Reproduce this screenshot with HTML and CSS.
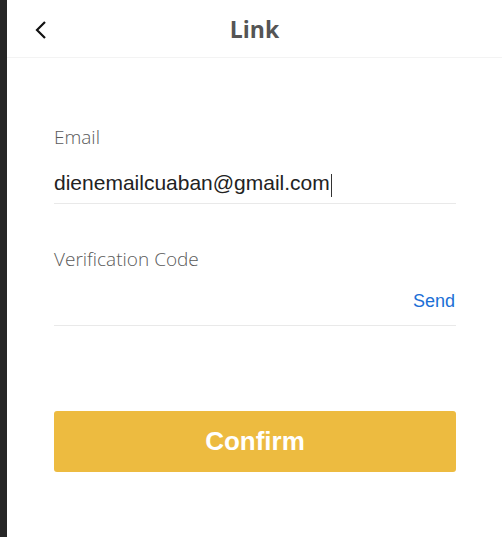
FILE: index.html
```html
<!DOCTYPE html>
<html lang="en">
<head>
  <meta charset="UTF-8">
  <meta name="viewport" content="width=device-width, initial-scale=1.0">
  <link rel="stylesheet" href="styles.css">
  <title>Link</title>
</head>
<body>
  <div class="frame">
    <div class="edge"></div>
    <div class="page">
      <nav class="header">
        <div class="back">
          <svg width="14" height="20" viewBox="0 0 14 20">
            <polyline points="11,2 3,10 11,18" fill="none" stroke="#111" stroke-width="2.2"/>
          </svg>
        </div>
        <div class="title">Link</div>
        <div></div>
      </nav>

      <div class="form">
        <div class="field">
          <div class="label">Email</div>
          <div class="input-row">
            <span class="value">dienemailcuaban@gmail.com</span><span class="caret"></span>
          </div>
        </div>

        <div class="field">
          <div class="label">Verification Code</div>
          <div class="input-row">
            <span class="value"></span>
            <a class="send">Send</a>
          </div>
        </div>

        <button class="confirm">Confirm</button>
      </div>
    </div>
  </div>
</body>
</html>
```

FILE: styles.css
```css
body {
  margin: 0;
  background: #fff;
}

.frame {
  display: flex;
  height: 537px;
}

.edge {
  width: 7px;
  background-color: #262626;
}

.page {
  flex: 1;
}

.header {
  display: grid;
  grid-template-columns: 1fr auto 1fr;
  align-items: center;
  height: 57px;
  border-bottom: 1px solid #f3f3f3;
}

.back {
  padding-left: 27px;
  padding-top: 2px;
  height: 20px;
}

.title {
  font-family: "Open Sans", "Noto Sans", sans-serif;
  font-weight: 700;
  font-size: 23px;
  color: #555;
}

.form {
  padding: 68px 46px 0 47px;
}

.field + .field {
  margin-top: 44px;
}

.label {
  font-family: "Open Sans", "Noto Sans", sans-serif;
  font-weight: 300;
  font-size: 19px;
  line-height: 22px;
  color: #5a5a5a;
}

.input-row {
  display: flex;
  align-items: flex-start;
  margin-top: 20px;
  height: 30px;
  padding-bottom: 5px;
  border-bottom: 1px solid #e9e9e9;
}

.value {
  flex: none;
  font-family: "Liberation Sans", Arial, sans-serif;
  font-size: 21px;
  line-height: 30px;
  color: #222;
}

.caret {
  width: 1px;
  height: 23px;
  margin-top: 6px;
  margin-left: 1px;
  background: #333;
}

.send {
  margin-left: auto;
  margin-right: 1px;
  font-family: "Liberation Sans", Arial, sans-serif;
  font-size: 18px;
  line-height: 22px;
  color: #1b6fd6;
}

.confirm {
  display: block;
  width: 100%;
  height: 61px;
  margin-top: 85px;
  border: none;
  border-radius: 3px;
  background-color: #edbb40;
  color: #fff;
  font-family: "Liberation Sans", Arial, sans-serif;
  font-weight: 700;
  font-size: 26px;
}
```
